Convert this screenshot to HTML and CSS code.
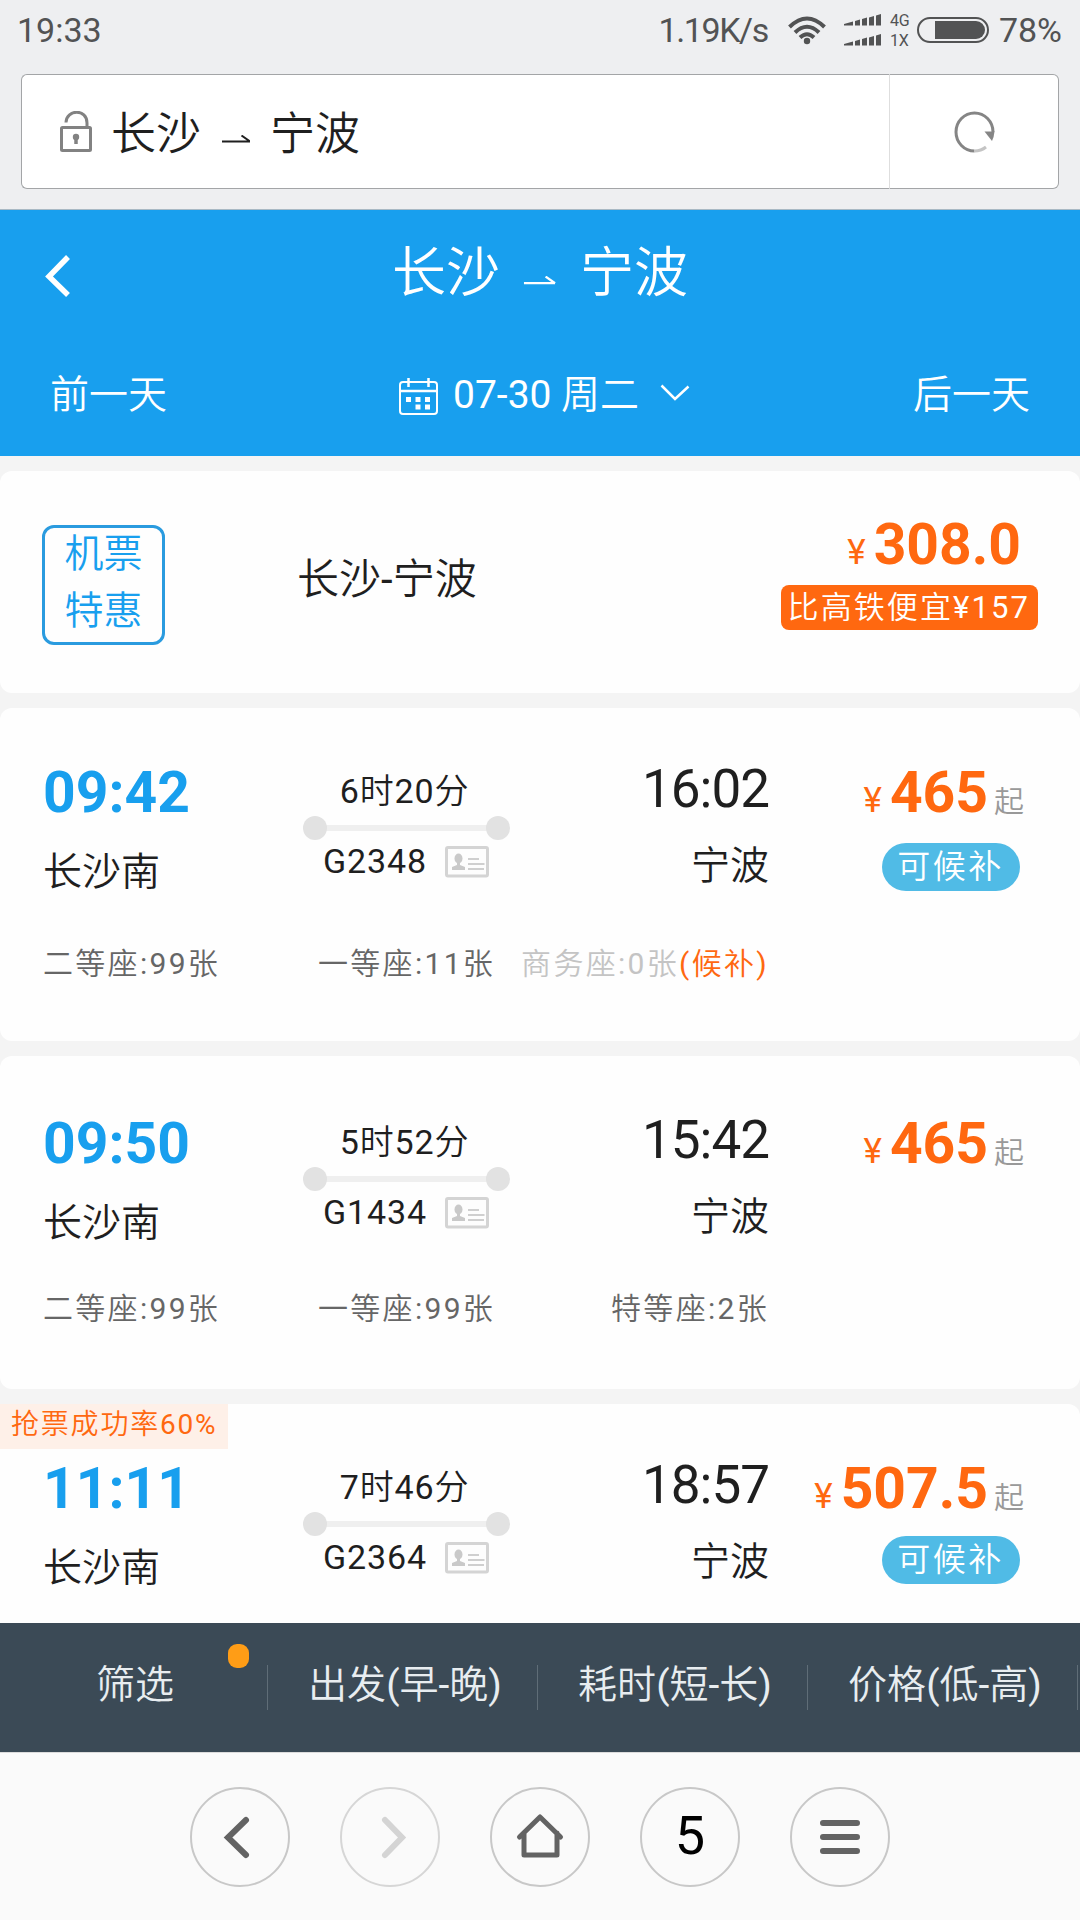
FILE: index.html
```html
<!DOCTYPE html>
<html lang="zh-CN">
<head>
    <meta charset="utf-8">
    <title>长沙 - 宁波</title>
    <meta name="viewport" content="width=device-width, initial-scale=1">
    <link rel="stylesheet" href="styles.css">
</head>
<body>
    <svg class="defs" width="0" height="0">
        <symbol id="arrow" viewBox="0 0 28 9">
            <path d="M0 6.5H28M19.5 0.5L28 6.5" fill="none" stroke="currentColor" stroke-width="2"/>
        </symbol>
        <symbol id="idcard" viewBox="0 0 44 32">
            <rect x="1.5" y="1.5" width="41" height="28.5" rx="1.5" fill="#fdfdfd" stroke="#d4d4d4" stroke-width="3"/>
            <ellipse cx="13.5" cy="12.5" rx="4" ry="5" fill="#c9c9c9"/>
            <path d="M12 16h3v3l5 2v3H7v-3l5-2z" fill="#c9c9c9"/>
            <path d="M23 13h11M23 18h16.500M23 23h16" stroke="#cfcfcf" stroke-width="2"/>
        </symbol>
    </svg>

    <div class="status-bar">
        <span class="clock">19:33</span>
        <span class="speed">1.19K/s</span>
        <svg class="wifi" width="38" height="29" viewBox="0 0 38 29">
            <g fill="none" stroke="#525354" stroke-width="4">
                <path d="M1.500 11Q19-6 36.500 11"/>
                <path d="M7 16.500Q19 5 31 16.500"/>
                <path d="M12 21.500Q19 15 26 21.500"/>
            </g>
            <circle cx="19" cy="25" r="3.200" fill="#525354"/>
        </svg>
        <svg class="signal" width="38" height="32" viewBox="0 0 38 32">
            <g id="bars" fill="#525354">
                <path d="M0 11.500V10L9 7.500V11.500zM11 11.500V7L16 5.500V11.500zM18 11.500V5L23 3.500V11.500zM25 11.500V3.500L30 2V11.500zM32 11.500V1.500L37 0V11.500z"/>
            </g>
            <use href="#bars" y="20"/>
        </svg>
        <div class="nets"><span>4G</span><span>1X</span></div>
        <div class="battery"><i></i></div>
        <span class="percent">78%</span>
    </div>

    <div class="address-bar">
        <div class="address">
            <svg width="32" height="41" viewBox="0 0 32 41">
                <rect x="1.500" y="16.500" width="29" height="23" rx="1" fill="none" stroke="#828282" stroke-width="3"/>
                <path d="M6 11.500C6.500-2 27-2.500 27 12V16" fill="none" stroke="#828282" stroke-width="3"/>
                <circle cx="16" cy="26" r="3.200" fill="#828282"/>
                <path d="M16 26V33" stroke="#828282" stroke-width="3.500"/>
            </svg>
            <span>长沙</span>
            <svg class="arrow" width="28" height="9"><use href="#arrow"/></svg>
            <span>宁波</span>
        </div>
        <div class="refresh">
            <svg width="42" height="42" viewBox="0 0 42 42">
                <path d="M39 21A18.500 19 0 1 0 20.500 40" fill="none" stroke="#858585" stroke-width="3"/>
                <path d="M20.500 40Q27 40 32 36" fill="none" stroke="#c4c4c4" stroke-width="3"/>
                <path d="M30.500 20.500H40.500Q40 26 38 30z" fill="#858585"/>
            </svg>
        </div>
    </div>

    <div class="header">
        <div class="title-row">
            <svg class="back" width="26" height="44" viewBox="0 0 26 44">
                <path d="M23 3L4 22.500L23 41" fill="none" stroke="#fff" stroke-width="5.500"/>
            </svg>
            <div class="title">
                <span>长沙</span>
                <svg class="arrow" width="33" height="10"><use href="#arrow"/></svg>
                <span>宁波</span>
            </div>
        </div>
        <div class="date-row">
            <span>前一天</span>
            <div class="date">
                <svg width="40" height="38" viewBox="0 0 40 38">
                    <rect x="1" y="4" width="37" height="32" rx="3" fill="none" stroke="#fff" stroke-width="2"/>
                    <path d="M1 13H38M9.500 0V9M29.500 0V9" stroke="#fff" stroke-width="2.500"/>
                    <path d="M7 19h5v5H7zM16.500 19h5v5h-5zM26 19h5v5h-5zM16.500 26.500h5v5h-5zM26 26.500h5v5h-5z" fill="#fff"/>
                </svg>
                <span><b>07-30</b> 周二</span>
                <svg class="down" width="30" height="19" viewBox="0 0 30 19">
                    <path d="M1.500 1.500L15 15L28.500 2.500" fill="none" stroke="#fff" stroke-width="2.500"/>
                </svg>
            </div>
            <span>后一天</span>
        </div>
    </div>

    <div class="list">
        <div class="card flight">
            <div class="badge"><span>机票</span><span>特惠</span></div>
            <div class="route">长沙<b>-</b>宁波</div>
            <div class="flight-price">
                <div class="price"><i>¥</i><b>308.0</b></div>
                <div class="cheap">比高铁便宜<b>¥157</b></div>
            </div>
        </div>

        <div class="card train">
            <div class="info">
                <div class="from"><b>09:42</b><span>长沙南</span></div>
                <div class="trip">
                    <span class="dur"><b>6</b>时<b>20</b>分</span>
                    <div class="line"></div>
                    <div class="no"><b>G2348</b><svg width="44" height="32"><use href="#idcard"/></svg></div>
                </div>
                <div class="to"><b>16:02</b><span>宁波</span></div>
                <div class="cost">
                    <div class="price"><i>¥</i><b>465</b><em>起</em></div>
                    <div class="pill">可候补</div>
                </div>
            </div>
            <div class="seats">
                <span>二等座<b>:99</b>张</span>
                <span>一等座<b>:11</b>张</span>
                <span class="none">商务座<b>:0</b>张<i><b>(</b>候补<b>)</b></i></span>
            </div>
        </div>

        <div class="card train second">
            <div class="info">
                <div class="from"><b>09:50</b><span>长沙南</span></div>
                <div class="trip">
                    <span class="dur"><b>5</b>时<b>52</b>分</span>
                    <div class="line"></div>
                    <div class="no"><b>G1434</b><svg width="44" height="32"><use href="#idcard"/></svg></div>
                </div>
                <div class="to"><b>15:42</b><span>宁波</span></div>
                <div class="cost">
                    <div class="price"><i>¥</i><b>465</b><em>起</em></div>
                </div>
            </div>
            <div class="seats">
                <span>二等座<b>:99</b>张</span>
                <span>一等座<b>:99</b>张</span>
                <span>特等座<b>:2</b>张</span>
            </div>
        </div>

        <div class="card train last">
            <div class="tag">抢票成功率<b>60%</b></div>
            <div class="info">
                <div class="from"><b>11:11</b><span>长沙南</span></div>
                <div class="trip">
                    <span class="dur"><b>7</b>时<b>46</b>分</span>
                    <div class="line"></div>
                    <div class="no"><b>G2364</b><svg width="44" height="32"><use href="#idcard"/></svg></div>
                </div>
                <div class="to"><b>18:57</b><span>宁波</span></div>
                <div class="cost">
                    <div class="price"><i>¥</i><b>507.5</b><em>起</em></div>
                    <div class="pill">可候补</div>
                </div>
            </div>
        </div>
    </div>

    <div class="filter-bar">
        <div class="filter">筛选<i class="dot"></i></div>
        <div class="filter">出发<b>(</b>早<b>-</b>晚<b>)</b></div>
        <div class="filter">耗时<b>(</b>短<b>-</b>长<b>)</b></div>
        <div class="filter">价格<b>(</b>低<b>-</b>高<b>)</b></div>
    </div>

    <div class="nav-bar">
        <div class="nav-button">
            <svg width="100" height="100" viewBox="0 0 100 100"><path d="M56 33L38 50.500L56 68" fill="none" stroke="#636363" stroke-width="6" stroke-linecap="round"/></svg>
        </div>
        <div class="nav-button disabled">
            <svg width="100" height="100" viewBox="0 0 100 100"><path d="M45 33L62 50.500L45 68" fill="none" stroke="#d4d4d4" stroke-width="6" stroke-linecap="round"/></svg>
        </div>
        <div class="nav-button">
            <svg width="100" height="100" viewBox="0 0 100 100"><path d="M29.500 50L50 30L70.500 50M34 46V68H67V46" fill="none" stroke="#636363" stroke-width="5" stroke-linecap="round" stroke-linejoin="round"/></svg>
        </div>
        <div class="nav-button tabs">5</div>
        <div class="nav-button">
            <svg width="100" height="100" viewBox="0 0 100 100"><path d="M33 36H67M33 50H67M33 64H67" stroke="#636363" stroke-width="6" stroke-linecap="round"/></svg>
        </div>
    </div>
</body>
</html>
```

FILE: styles.css
```css
* {
    box-sizing: border-box;
}

body {
    margin: 0;
    width: 1080px;
    height: 1920px;
    overflow: hidden;
    display: flex;
    flex-direction: column;
    font-family: Roboto, "Noto Sans CJK SC", sans-serif;
    font-weight: 350;
    color: #1f1f1f;
    background: #f4f4f4;
}

i, em {
    font-style: normal;
}

/* digits and punctuation, a bit heavier than the chinese text */
b {
    font-weight: 400;
}

svg {
    display: block;
    flex: none;
}

span, b, i, em {
    white-space: nowrap;
}

.defs {
    position: absolute;
}

/* phone status bar */
.status-bar {
    height: 74px;
    flex: none;
    display: flex;
    align-items: flex-start;
    padding: 10px 18px 0 17px;
    font-size: 34px;
    line-height: 40px;
    font-weight: 400;
    color: #525354;
    background: #eeeff1;
}

.clock {
    flex: 1;
}

.speed {
    letter-spacing: -1.4px;
}

.wifi {
    margin: 6px 0 0 20px;
}

.signal {
    margin: 4px 0 0 18px;
}

.nets {
    margin: 1px 0 0 8px;
    width: 27px;
    display: flex;
    flex-direction: column;
    font-size: 16px;
    line-height: 20px;
}

.battery {
    width: 72px;
    height: 26px;
    margin: 7px 10px 0 0;
    padding: 2px;
    border: 2px solid #525354;
    border-radius: 13px;
}

.battery i {
    display: block;
    width: 50px;
    height: 18px;
    margin-left: auto;
    border-radius: 0 9px 9px 0;
    background: #525354;
}

/* browser address bar */
.address-bar {
    flex: none;
    height: 136px;
    padding: 0 21px 20px;
    display: flex;
    background: #eeeff1;
    border-bottom: 1px solid #a9b9c4;
}

.address {
    width: 869px;
    display: flex;
    align-items: center;
    padding: 0 0 1px 38px;
    font-size: 45px;
    line-height: 60px;
    background: #fff;
    border: 1px solid #a3a5a7;
    border-right: 1px solid #dedede;
    border-radius: 6px 0 0 6px;
}

.address span {
    margin-top: 8px;
}

.address span:nth-child(2) {
    margin-left: 19px;
}

.address .arrow {
    margin: 16px 20px 0 21px;
}

.refresh {
    flex: 1;
    display: flex;
    align-items: center;
    justify-content: center;
    padding-left: 2px;
    background: #fff;
    border: 1px solid #a3a5a7;
    border-left: none;
    border-radius: 0 6px 6px 0;
}

/* blue page header */
.header {
    flex: none;
    height: 246px;
    padding: 0 50px;
    color: #fff;
    background: #189fee;
}

.title-row {
    height: 122px;
    display: flex;
    align-items: center;
    margin-left: -5px;
}

.back {
    margin-top: 10px;
}

.title {
    flex: 1;
    display: flex;
    align-items: center;
    justify-content: center;
    padding: 5px 21px 0 0;
    font-size: 54px;
    line-height: 80px;
}

.title .arrow {
    margin: 14px 24px 0 23px;
}

.date-row {
    height: 124px;
    display: flex;
    justify-content: space-between;
    font-size: 39px;
    line-height: 60px;
    padding-top: 33px;
}

.date {
    display: flex;
    margin-left: 9px;
}

.date span {
    margin: 0 21px 0 14px;
}

.date svg {
    margin-top: 13px;
}

.date .down {
    margin-top: 19px;
}

/* results */
.list {
    flex: none;
    height: 1167px;
    padding-top: 15px;
    overflow: hidden;
    display: flex;
    flex-direction: column;
    gap: 15px;
}

.card {
    flex: none;
    height: 333px;
    background: #fefefe;
    border-radius: 12px;
}

.flight {
    height: 222px;
    display: flex;
    padding: 0 42px;
}

.badge {
    width: 123px;
    height: 120px;
    margin-top: 54px;
    display: flex;
    flex-direction: column;
    align-items: center;
    font-size: 39px;
    line-height: 57px;
    color: #189fee;
    border: 3px solid #2a9bdf;
    border-radius: 12px;
}

.badge span:first-child {
    margin-top: -2px;
}

.route {
    margin: 79px 0 0 132px;
    font-size: 42px;
    line-height: 60px;
}

.flight-price {
    margin: 39px 0 0 auto;
    display: flex;
    flex-direction: column;
    align-items: flex-end;
}

.price {
    display: flex;
    align-items: baseline;
    color: #ff6810;
    line-height: 70px;
}

.price i {
    font-size: 35px;
    font-weight: 400;
    margin-right: 8px;
}

.price b {
    font-size: 57px;
    font-weight: 700;
}

.price em {
    font-size: 30px;
    margin-left: 6px;
    color: #999;
}

.flight .price {
    height: 70px;
    margin-right: 17px;
}

.cheap {
    height: 45px;
    margin-top: 5px;
    padding: 0 8px 0 7px;
    font-size: 31px;
    line-height: 45px;
    letter-spacing: 2.1px;
    color: #fff;
    background: #ff6810;
    border-radius: 8px;
}

.train {
    padding: 50px 0 0 43px;
    position: relative;
}

.second {
    padding-top: 53px;
}

.info {
    display: flex;
    height: 172px;
}

.from {
    width: 260px;
    display: flex;
    flex-direction: column;
}

.from b {
    font-size: 57px;
    line-height: 70px;
    font-weight: 700;
    color: #189fee;
}

.from span, .to span {
    font-size: 39px;
    line-height: 60px;
    margin-top: 14px;
}

.trip {
    width: 207px;
    padding-top: 9px;
}

.dur {
    display: block;
    text-align: center;
    font-size: 34px;
    line-height: 49px;
    letter-spacing: 0.8px;
    margin-right: 4px;
}

.line {
    height: 24px;
    display: flex;
    align-items: center;
    justify-content: space-between;
    background: linear-gradient(#efefef, #efefef) center / 184px 6px no-repeat;
}

.line::before, .line::after {
    content: "";
    width: 24px;
    height: 24px;
    border-radius: 50%;
    background: #e2e2e2;
}

.no {
    display: flex;
    margin: 0 0 0 20px;
    font-size: 34px;
    line-height: 42px;
    letter-spacing: 0.9px;
}

.no b {
    width: 105px;
}

.no svg {
    margin: 6px 0 0 17px;
}

.to {
    width: 259px;
    display: flex;
    flex-direction: column;
    align-items: flex-end;
}

.to b {
    font-size: 53px;
    line-height: 62px;
    letter-spacing: -1px;
}

.to span {
    margin-top: 16px;
}

.cost {
    width: 255px;
    display: flex;
    flex-direction: column;
    align-items: flex-end;
}

.cost .price {
    height: 70px;
}

.pill {
    width: 138px;
    height: 48px;
    margin: 15px 4px 0 0;
    padding-right: 1px;
    text-align: center;
    font-size: 33px;
    line-height: 48px;
    letter-spacing: 2.5px;
    color: #fff;
    background: #50bbe6;
    border-radius: 24px;
}

.seats {
    display: grid;
    grid-template-columns: 275px 1fr auto;
    width: 726px;
    margin-top: 11px;
    font-size: 30px;
    line-height: 46px;
    letter-spacing: 2.3px;
    color: #666;
}

.second .seats {
    margin-top: 5px;
}

.seats .none {
    color: #c4c4c4;
}

.seats i {
    color: #ff6810;
}

.last {
    border-top-left-radius: 0;
}

/* lies over the corner of the card */
.tag {
    position: absolute;
    left: 0;
    top: 0;
    width: 228px;
    height: 45px;
    padding-left: 11px;
    font-size: 28px;
    line-height: 42px;
    letter-spacing: 1.8px;
    color: #ff6810;
    background: #fef0e8;
    white-space: nowrap;
}

.last .pill {
    margin-top: 12px;
}

/* sort and filter */
.filter-bar {
    flex: none;
    height: 129px;
    display: flex;
    color: #e8edf0;
    background: #3b4a56;
}

.filter {
    position: relative;
    width: 270px;
    text-align: center;
    font-size: 39px;
    line-height: 124px;
}

.filter::after {
    content: "";
    position: absolute;
    right: 2px;
    top: 42px;
    width: 1px;
    height: 45px;
    background: #5f6d77;
}

.dot {
    position: absolute;
    left: 228px;
    top: 21px;
    width: 21px;
    height: 24px;
    border-radius: 9px;
    background: #ff9d16;
}

/* browser toolbar */
.nav-bar {
    flex: 1;
    display: flex;
    justify-content: center;
    gap: 50px;
    padding-top: 34px;
    background: #fafafa;
    border-top: 1px solid #dcdcdc;
}

.nav-button {
    width: 100px;
    height: 100px;
    border: 2px solid #c8c8c8;
    border-radius: 50%;
}

.nav-button svg {
    margin: -2px;
}

.disabled {
    border-color: #d6d6d6;
}

.tabs {
    text-align: center;
    font-family: Roboto, sans-serif;
    font-size: 54px;
    line-height: 94px;
    font-weight: 400;
    color: #000;
}
```
